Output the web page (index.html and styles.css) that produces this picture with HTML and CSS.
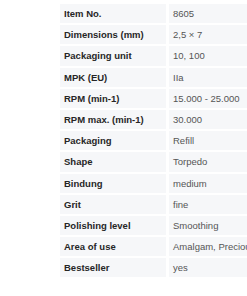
FILE: index.html
```html
<!DOCTYPE html>
<html lang="en">
<head>
<meta charset="utf-8">
<link rel="stylesheet" href="styles.css">
</head>
<body>
<div class="wrap">
<table class="specs">
<tbody>
<tr><th>Item No.</th><td>8605</td></tr>
<tr><th>Dimensions (mm)</th><td>2,5 × 7</td></tr>
<tr><th>Packaging unit</th><td>10, 100</td></tr>
<tr><th>MPK (EU)</th><td>IIa</td></tr>
<tr><th>RPM (min-1)</th><td>15.000 - 25.000</td></tr>
<tr><th>RPM max. (min-1)</th><td>30.000</td></tr>
<tr><th>Packaging</th><td>Refill</td></tr>
<tr><th>Shape</th><td>Torpedo</td></tr>
<tr><th>Bindung</th><td>medium</td></tr>
<tr><th>Grit</th><td>fine</td></tr>
<tr><th>Polishing level</th><td>Smoothing</td></tr>
<tr><th>Area of use</th><td>Amalgam, Precious metals</td></tr>
<tr><th>Bestseller</th><td>yes</td></tr>
</tbody>
</table>
</div>
</body>
</html>
```
FILE: styles.css
```css
html, body {
  margin: 0;
  padding: 0;
  background: #ffffff;
  overflow: hidden;
}
.wrap {
  padding: 4px 0 0 57px;
  width: 400px;
}
.specs {
  border-collapse: separate;
  border-spacing: 3px 2px;
  margin: -2px 0 0 0;
  font-family: "Liberation Sans", Arial, sans-serif;
  font-size: 9.5px;
  table-layout: fixed;
  width: 275px;
}
.specs th,
.specs td {
  background: #f6f7f9;
  height: 19.2px;
  padding: 0 4px;
  text-align: left;
  vertical-align: middle;
  white-space: nowrap;
  box-sizing: border-box;
}
.specs th {
  width: 106px;
  font-weight: bold;
  color: #262626;
}
.specs td {
  width: 160px;
  font-weight: normal;
  color: #555555;
}
```
